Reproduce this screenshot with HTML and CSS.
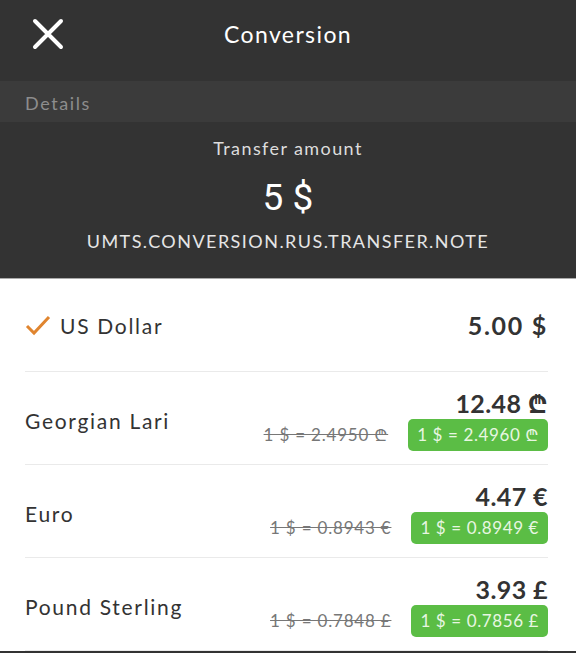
FILE: index.html
```html
<!DOCTYPE html>
<html lang="en">
<head>
    <meta charset="UTF-8">
    <meta name="viewport" content="width=device-width, initial-scale=1">
    <title>Conversion</title>
    <link rel="stylesheet" href="styles.css">
</head>
<body>
    <div class="screen">
        <div class="topbar">
            <a class="close" href="#">
                <svg width="32" height="32" viewBox="0 0 32 32">
                    <path d="M3 3 L29 29 M29 3 L3 29" stroke="#fff" stroke-width="4" stroke-linecap="round"/>
                </svg>
            </a>
            <h1 class="title">Conversion</h1>
            <span></span>
        </div>
        <div class="band">Details</div>
        <div class="summary">
            <p class="summary-label">Transfer amount</p>
            <p class="summary-amount">5 $</p>
            <p class="summary-note">UMTS.CONVERSION.RUS.TRANSFER.NOTE</p>
        </div>
        <ul class="rates">
            <li class="rate rate-base">
                <div class="rate-name">
                    <svg class="check" width="26" height="22" viewBox="0 0 26 22">
                        <path d="M2 12 L9 19 L24 3" fill="none" stroke="#e0852f" stroke-width="3"/>
                    </svg>
                    US Dollar
                </div>
                <div class="rate-sum">5.00 $</div>
            </li>
            <li class="rate">
                <div class="rate-name">Georgian Lari</div>
                <div class="rate-right">
                    <div class="rate-sum">12.48 ₾</div>
                    <div class="rate-line">
                        <span class="old">1 $ = 2.4950 ₾</span>
                        <span class="new">1 $ = 2.4960 ₾</span>
                    </div>
                </div>
            </li>
            <li class="rate">
                <div class="rate-name">Euro</div>
                <div class="rate-right">
                    <div class="rate-sum">4.47 €</div>
                    <div class="rate-line">
                        <span class="old">1 $ = 0.8943 €</span>
                        <span class="new">1 $ = 0.8949 €</span>
                    </div>
                </div>
            </li>
            <li class="rate">
                <div class="rate-name">Pound Sterling</div>
                <div class="rate-right">
                    <div class="rate-sum">3.93 £</div>
                    <div class="rate-line">
                        <span class="old">1 $ = 0.7848 £</span>
                        <span class="new">1 $ = 0.7856 £</span>
                    </div>
                </div>
            </li>
        </ul>
        <div class="bottom-edge"></div>
    </div>
</body>
</html>
```

FILE: styles.css
```css
*{
    margin:0;
    padding:0;
    box-sizing:border-box;
}
ul li{
    list-style-type:none;
}
body{
    font-family:"Lato","Noto Sans","DejaVu Sans",sans-serif;
    background:#fff;
    color:#333;
}
.screen{
    width:576px;
    height:653px;
    overflow:hidden;
}
.topbar{
    height:81px;
    background:#333;
    display:grid;
    grid-template-columns:1fr auto 1fr;
    align-items:center;
    padding:0 32px 14px 32px;
}
.close{
    display:block;
    width:32px;
    height:32px;
}
.title{
    font-size:23px;
    font-weight:400;
    color:#fff;
    letter-spacing:1.4px;
}
.band{
    height:41px;
    line-height:41px;
    background:#3b3b3b;
    color:#8d8d8d;
    font-size:18px;
    padding:2px 0 0 25px;
    letter-spacing:1.6px;
}
.summary{
    height:157px;
    background:#333;
    border-bottom:1px solid #aaa;
    text-align:center;
    padding-top:14px;
}
.summary-label{
    font-size:18px;
    color:#ddd;
    line-height:24px;
    letter-spacing:1.4px;
}
.summary-amount{
    font-family:Roboto,"Noto Sans",sans-serif;
    font-size:37px;
    color:#fff;
    line-height:44px;
    margin-top:16px;
}
.summary-note{
    font-size:18px;
    color:#e6e6e6;
    line-height:24px;
    margin-top:9px;
    letter-spacing:1.45px;
}
.rates{
    padding:0 28px 0 25px;
}
.rate{
    height:93px;
    border-bottom:1px solid #eaeaea;
    display:flex;
    justify-content:space-between;
    align-items:center;
}
.rate-name{
    font-size:21px;
    color:#333;
    display:flex;
    align-items:center;
    letter-spacing:1.7px;
    padding-top:4px;
}
.rate-base .rate-name{
    padding-top:0;
}
.check{
    margin-right:9px;
}
.rate-sum{
    font-size:25px;
    font-weight:700;
    color:#333;
    text-align:right;
    line-height:30px;
    letter-spacing:0.4px;
}
.rate-base .rate-sum{
    letter-spacing:1.7px;
}
.rate-right{
    display:flex;
    flex-direction:column;
    align-items:flex-end;
    gap:1px;
    padding-top:2px;
}
.rate-line{
    display:flex;
    align-items:center;
    gap:20px;
}
.old{
    font-size:17px;
    color:#777;
    text-decoration:line-through;
    letter-spacing:0.8px;
}
.new{
    background:#5bbd45;
    color:#e8f6e2;
    font-size:17px;
    border-radius:5px;
    height:32px;
    line-height:32px;
    padding:0 9px;
    letter-spacing:0.6px;
}
.bottom-edge{
    height:3px;
    background:#333;
}
```
